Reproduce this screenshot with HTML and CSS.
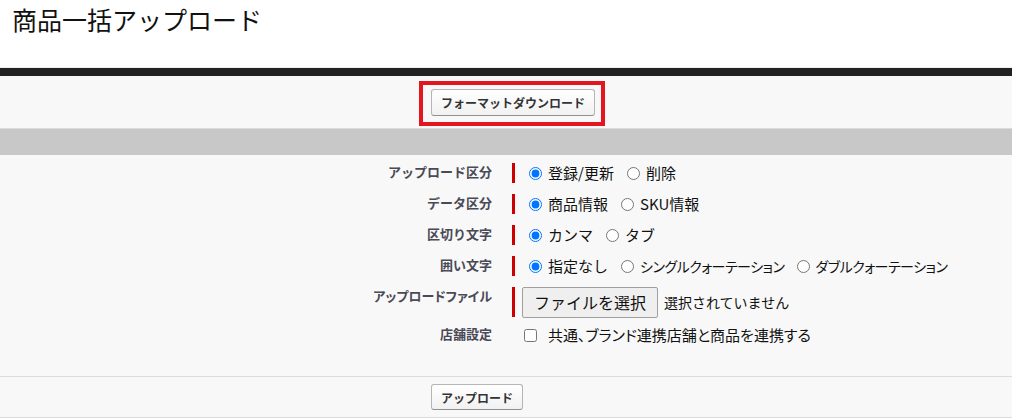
FILE: index.html
```html
<!DOCTYPE html>
<html lang="ja">
<head>
<meta charset="utf-8">
<title>商品一括アップロード</title>
<link rel="stylesheet" href="styles.css">
</head>
<body>
<h1 class="title">商品一括アップロード</h1>
<div class="block">
  <div class="btn-row btn-row-top">
    <div class="highlight"><button class="btn" type="button">フォーマットダウンロード</button></div>
  </div>
  <div class="subheader"></div>
  <div class="form">
    <div class="label">アップロード区分</div>
    <div class="data req">
      <label class="opt"><input type="radio" name="up" checked><span>登録/更新</span></label>
      <label class="opt"><input type="radio" name="up"><span>削除</span></label>
    </div>

    <div class="label">データ区分</div>
    <div class="data req">
      <label class="opt"><input type="radio" name="dt" checked><span>商品情報</span></label>
      <label class="opt"><input type="radio" name="dt"><span>SKU情報</span></label>
    </div>

    <div class="label">区切り文字</div>
    <div class="data req">
      <label class="opt"><input type="radio" name="sep" checked><span>カンマ</span></label>
      <label class="opt"><input type="radio" name="sep"><span>タブ</span></label>
    </div>

    <div class="label">囲い文字</div>
    <div class="data req">
      <label class="opt"><input type="radio" name="q" checked><span>指定なし</span></label>
      <label class="opt opt-kana"><input type="radio" name="q"><span>シングルクォーテーション</span></label>
      <label class="opt opt-kana"><input type="radio" name="q"><span>ダブルクォーテーション</span></label>
    </div>

    <div class="label label-narrow">アップロードファイル</div>
    <div class="data req file-row">
      <button class="file-btn" type="button">ファイルを選択</button>
      <span class="file-name">選択されていません</span>
    </div>

    <div class="label label-shop">店舗設定</div>
    <div class="data check-row">
      <label class="chk"><input type="checkbox"><span>共通、ブランド連携店舗と商品を連携する</span></label>
    </div>
  </div>
  <div class="btn-row btn-row-bottom">
    <button class="btn" type="button">アップロード</button>
  </div>
</div>
</body>
</html>
```

FILE: styles.css
```css
* { box-sizing: border-box; }

html, body {
  margin: 0;
  padding: 0;
  background: #ffffff;
  font-family: "Noto Sans CJK JP", "Noto Sans", sans-serif;
  color: #000;
}

.title {
  margin: 0;
  height: 68px;
  padding: 4px 0 0 12px;
  font-size: 25px;
  line-height: 30px;
  font-weight: 400;
  color: #111;
  border-bottom: 1px solid #eeeeee;
}

.block {
  border-top: 8px solid #222222;
  background: #f8f8f8;
}

.btn-row-top {
  height: 53px;
  padding: 5px 0 0 419px;
  border-bottom: 1px solid #dcdcdc;
}

.highlight {
  display: inline-block;
  border: 4px solid #e3151e;
  padding: 4px 6px 6px 8px;
}

.btn {
  display: block;
  height: 27px;
  padding: 0 9px;
  font-family: "Noto Sans CJK JP", sans-serif;
  font-size: 12px;
  font-weight: 700;
  color: #333333;
  background: linear-gradient(#ffffff, #f1f1f1);
  border: 1px solid #b5b5b5;
  border-bottom-color: #8f8f8f;
  border-radius: 3px;
}

.subheader {
  height: 26px;
  background: #c8c8c8;
}

.form {
  height: 222px;
  padding-top: 8px;
  display: grid;
  grid-template-columns: 492px auto;
  column-gap: 20px;
  row-gap: 11px;
  align-content: start;
  align-items: start;
  border-bottom: 1px solid #dcdcdc;
}

.label {
  text-align: right;
  font-size: 13px;
  line-height: 16px;
  font-weight: 700;
  color: #4a4a56;
  padding-top: 1px;
}

.label-narrow {
  font-feature-settings: "palt";
}

.data {
  display: flex;
  align-items: center;
  height: 20px;
}

.req {
  border-left: 3px solid #cc0000;
  padding-left: 14px;
}

.opt {
  display: flex;
  align-items: center;
  margin-right: 13px;
  font-size: 15px;
  line-height: 20px;
  color: #111;
}

.opt-kana {
  font-size: 14px;
  letter-spacing: -0.5px;
  font-feature-settings: "palt";
  margin-right: 12px;
}

.opt input {
  margin: 1px 6px 0 0;
  width: 13px;
  height: 13px;
}

.file-row {
  height: 30px;
  padding-left: 7px;
}

.file-btn {
  height: 31px;
  padding: 0 11px;
  font-family: "Noto Sans CJK JP", sans-serif;
  font-size: 16px;
  color: #111;
  background: #efefef;
  border: 1px solid #a0a0a0;
  border-radius: 2px;
}

.file-name {
  margin-left: 6px;
  font-size: 14px;
  color: #111;
}

.label-shop {
  margin-top: -3px;
}

.check-row {
  height: 14px;
  padding-left: 12px;
}

.chk {
  display: flex;
  align-items: center;
  font-size: 15px;
  line-height: 20px;
  color: #111;
  font-feature-settings: "palt";
}

.chk input {
  margin: 0 11px 0 0;
  width: 13px;
  height: 13px;
}

.btn-row-bottom {
  height: 41px;
  padding: 7px 0 0 431px;
  border-bottom: 1px solid #dcdcdc;
}

.btn-row-bottom .btn {
  height: 26px;
}
```
